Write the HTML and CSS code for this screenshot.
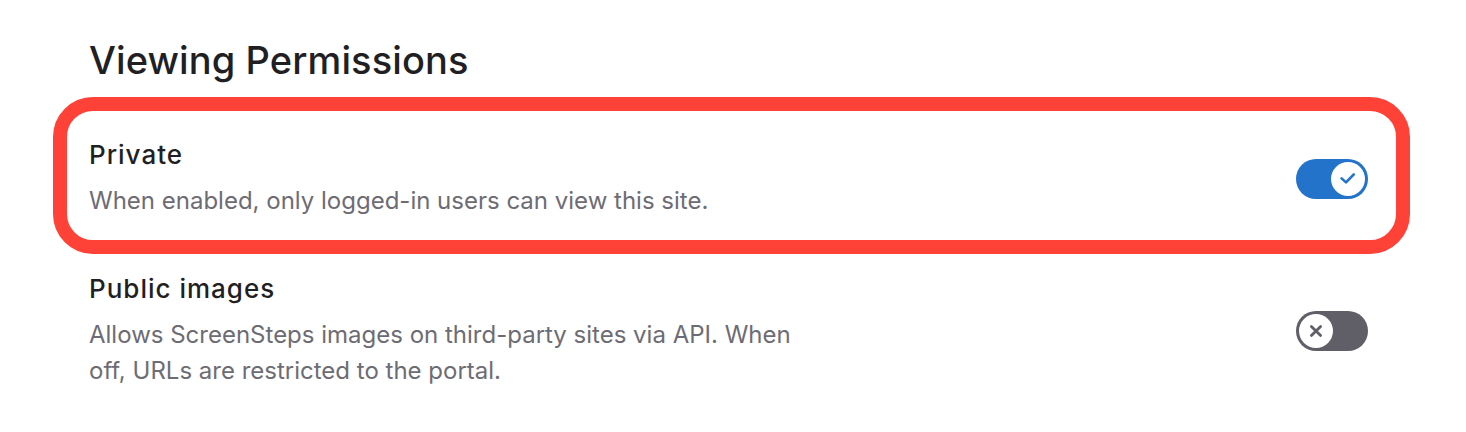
FILE: index.html
```html
<!DOCTYPE html>
<html lang="en">
<head>
<meta charset="utf-8">
<title>Viewing Permissions</title>
<link rel="stylesheet" href="styles.css">
</head>
<body>
<section class="panel">
  <h2 class="panel-title">Viewing Permissions</h2>
  <div class="settings">
    <div class="setting setting--highlighted">
      <div class="setting-text">
        <div class="setting-name">Private</div>
        <div class="setting-desc">When enabled, only logged-in users can view this site.</div>
      </div>
      <button class="toggle toggle--on" type="button" aria-pressed="true">
        <span class="knob">
          <svg viewBox="0 0 20 20" width="20" height="20"><path d="M3.6 9.4 L8 13.4 L15.8 5.4" fill="none" stroke="currentColor" stroke-width="2.6" stroke-linecap="round" stroke-linejoin="round"/></svg>
        </span>
      </button>
      <span class="highlight" aria-hidden="true"></span>
    </div>
    <div class="setting">
      <div class="setting-text">
        <div class="setting-name">Public images</div>
        <div class="setting-desc">Allows ScreenSteps images on third-party sites via API. When off, URLs are restricted to the portal.</div>
      </div>
      <button class="toggle toggle--off" type="button" aria-pressed="false">
        <span class="knob">
          <svg viewBox="0 0 20 20" width="20" height="20"><path d="M5.4 5.4 L14.6 14.6 M14.6 5.4 L5.4 14.6" fill="none" stroke="currentColor" stroke-width="2.8" stroke-linecap="round"/></svg>
        </span>
      </button>
    </div>
  </div>
</section>
</body>
</html>
```
FILE: styles.css
```css
* { box-sizing: border-box; }
html, body { margin: 0; padding: 0; background: #ffffff; }
body {
  font-family: Inter, "Noto Sans", "Liberation Sans", sans-serif;
  color: #1f1f24;
}
.panel {
  padding: 35px 98px 0 89px;
}
.panel-title {
  margin: 0;
  font-size: 38px;
  line-height: 50px;
  font-weight: 500;
  letter-spacing: 0.1px;
  color: #1f1f24;
}
.settings {
  display: flex;
  flex-direction: column;
  margin-top: 54px;
  gap: 54px;
}
.setting {
  position: relative;
  display: flex;
  align-items: center;
  justify-content: space-between;
}
.setting-text {
  display: flex;
  flex-direction: column;
  gap: 12px;
  max-width: 720px;
}
.setting-name {
  font-size: 26px;
  line-height: 32px;
  font-weight: 500;
  letter-spacing: 1px;
  color: #1f1f24;
}
.setting-desc {
  font-size: 24px;
  line-height: 36px;
  color: #6d6c74;
}
.toggle {
  position: relative;
  width: 72px;
  height: 40px;
  border: none;
  border-radius: 20px;
  padding: 0;
  cursor: pointer;
  flex: none;
}
.toggle--on { background: #2273c9; }
.toggle--off { background: #605f68; }
.knob {
  position: absolute;
  top: 3px;
  width: 34px;
  height: 34px;
  border-radius: 50%;
  background: #ffffff;
  display: flex;
  align-items: center;
  justify-content: center;
}
.toggle--on .knob { right: 3px; color: #2273c9; }
.toggle--off .knob { left: 3px; color: #605f68; }
.highlight {
  position: absolute;
  left: -36px;
  right: -42px;
  top: -42px;
  bottom: -35px;
  border: 14px solid #ff4238;
  border-radius: 40px;
  pointer-events: none;
}
```
